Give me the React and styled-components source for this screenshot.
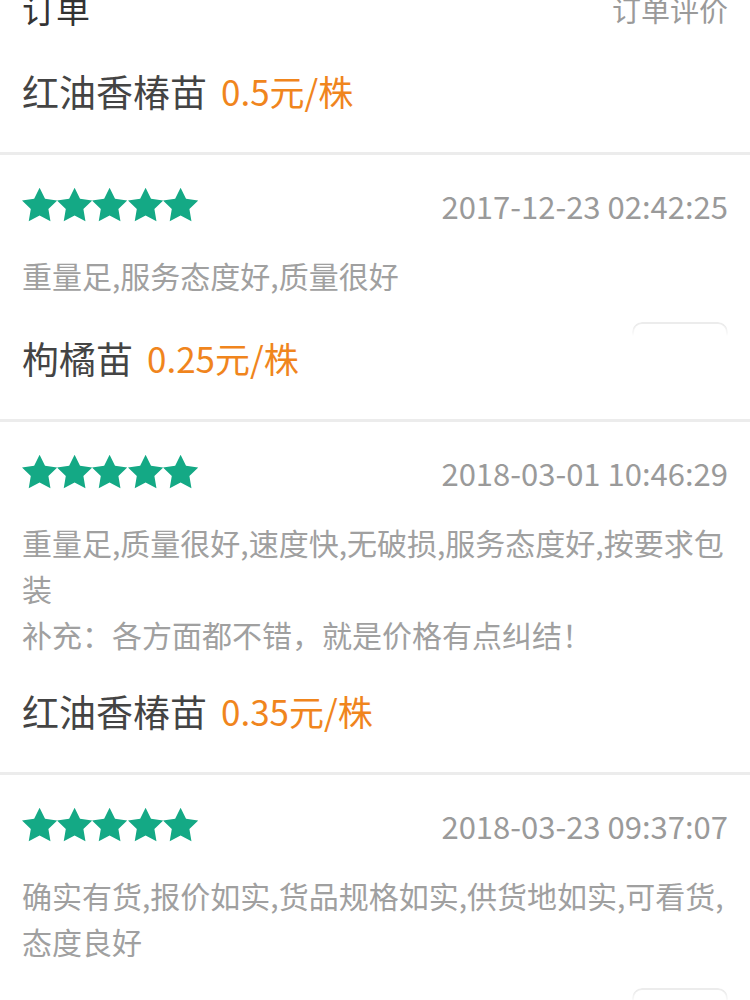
import React from 'react';
import styled, { createGlobalStyle } from 'styled-components';

const GlobalStyle = createGlobalStyle`
  html, body {
    margin: 0;
    padding: 0;
    background: #fff;
  }
  body {
    font-family: "Noto Sans CJK SC", "Noto Sans", sans-serif;
    overflow: hidden;
  }
`;

const Page = styled.div`
  width: 750px;
  background: #fff;
`;

// top bar, scrolled partly out of view
const TopBar = styled.div`
  display: flex;
  align-items: center;
  justify-content: space-between;
  height: 46px;
  margin-top: -14px;
  padding: 0 22px;
`;

const Title = styled.div`
  font-size: 34px;
  line-height: 1;
  color: #333;
`;

const TopLink = styled.div`
  font-size: 29px;
  line-height: 1;
  color: #9a9a9a;
`;

const ProductRow = styled.div`
  display: flex;
  align-items: center;
  height: 36px;
  padding: ${(p) => p.$top}px 22px 43px;
`;

const ProductName = styled.span`
  font-size: 37px;
  line-height: 36px;
  color: #444;
`;

const Price = styled.span`
  margin-left: 14px;
  font-size: 35px;
  line-height: 36px;
  color: #f0851d;
`;

const Divider = styled.div`
  height: 3px;
  background: #ececec;
`;

const Review = styled.div`
  padding: 27px 22px 0;
`;

const ReviewHead = styled.div`
  display: flex;
  align-items: center;
  justify-content: space-between;
  height: 46px;
`;

const Stars = styled.div`
  display: flex;
  align-items: center;
`;

const StarIcon = styled.svg`
  width: 35.2px;
  height: 35.2px;
  display: block;
  fill: #14a985;
`;

const Time = styled.div`
  font-size: 31px;
  line-height: 1;
  color: #9a9a9a;
`;

const Comment = styled.div`
  margin-top: 24px;
  font-size: 30px;
  line-height: 46px;
  color: #a0a0a0;
  word-break: break-all;
`;

const GhostRow = styled.div`
  display: flex;
  justify-content: flex-end;
  margin-top: 24px;
  height: 18px;
  padding: 0 22px;
`;

const GhostButton = styled.div`
  width: 96px;
  height: 14px;
  box-sizing: border-box;
  border: 2px solid #ececec;
  border-bottom: none;
  border-radius: 10px 10px 0 0;
  -webkit-mask-image: linear-gradient(#000 30%, transparent);
  mask-image: linear-gradient(#000 30%, transparent);
`;

const Star = () => (
  <StarIcon viewBox="2 1.6 20 20">
    <path d="M12 2l3.09 6.26L22 9.27l-5 4.87 1.18 6.88L12 17.77l-6.18 3.25L7 14.14 2 9.27l6.91-1.01L12 2z" />
  </StarIcon>
);

const reviews = [
  {
    time: '2017-12-23 02:42:25',
    lines: ['重量足,服务态度好,质量很好'],
    ghost: true,
    next: { name: '枸橘苗', price: '0.25元/株' },
  },
  {
    time: '2018-03-01 10:46:29',
    lines: ['重量足,质量很好,速度快,无破损,服务态度好,按要求包装', '补充：各方面都不错，就是价格有点纠结！'],
    ghost: false,
    next: { name: '红油香椿苗', price: '0.35元/株' },
  },
  {
    time: '2018-03-23 09:37:07',
    lines: ['确实有货,报价如实,货品规格如实,供货地如实,可看货,态度良好'],
    ghost: true,
    next: null,
  },
];

const App = () => {
  return (
    <Page>
      <GlobalStyle />
      <TopBar>
        <Title>订单</Title>
        <TopLink>订单评价</TopLink>
      </TopBar>
      <ProductRow $top={41}>
        <ProductName>红油香椿苗</ProductName>
        <Price>0.5元/株</Price>
      </ProductRow>
      {reviews.map((r, i) => (
        <React.Fragment key={i}>
          <Divider />
          <Review>
            <ReviewHead>
              <Stars>
                {[0, 1, 2, 3, 4].map((s) => (
                  <Star key={s} />
                ))}
              </Stars>
              <Time>{r.time}</Time>
            </ReviewHead>
            <Comment>
              {r.lines.map((l, j) => (
                <div key={j}>{l}</div>
              ))}
            </Comment>
          </Review>
          {r.ghost && (
            <GhostRow>
              <GhostButton />
            </GhostRow>
          )}
          {r.next && (
            <ProductRow $top={r.ghost ? 0 : 36}>
              <ProductName>{r.next.name}</ProductName>
              <Price>{r.next.price}</Price>
            </ProductRow>
          )}
        </React.Fragment>
      ))}
    </Page>
  );
};

export default App;
